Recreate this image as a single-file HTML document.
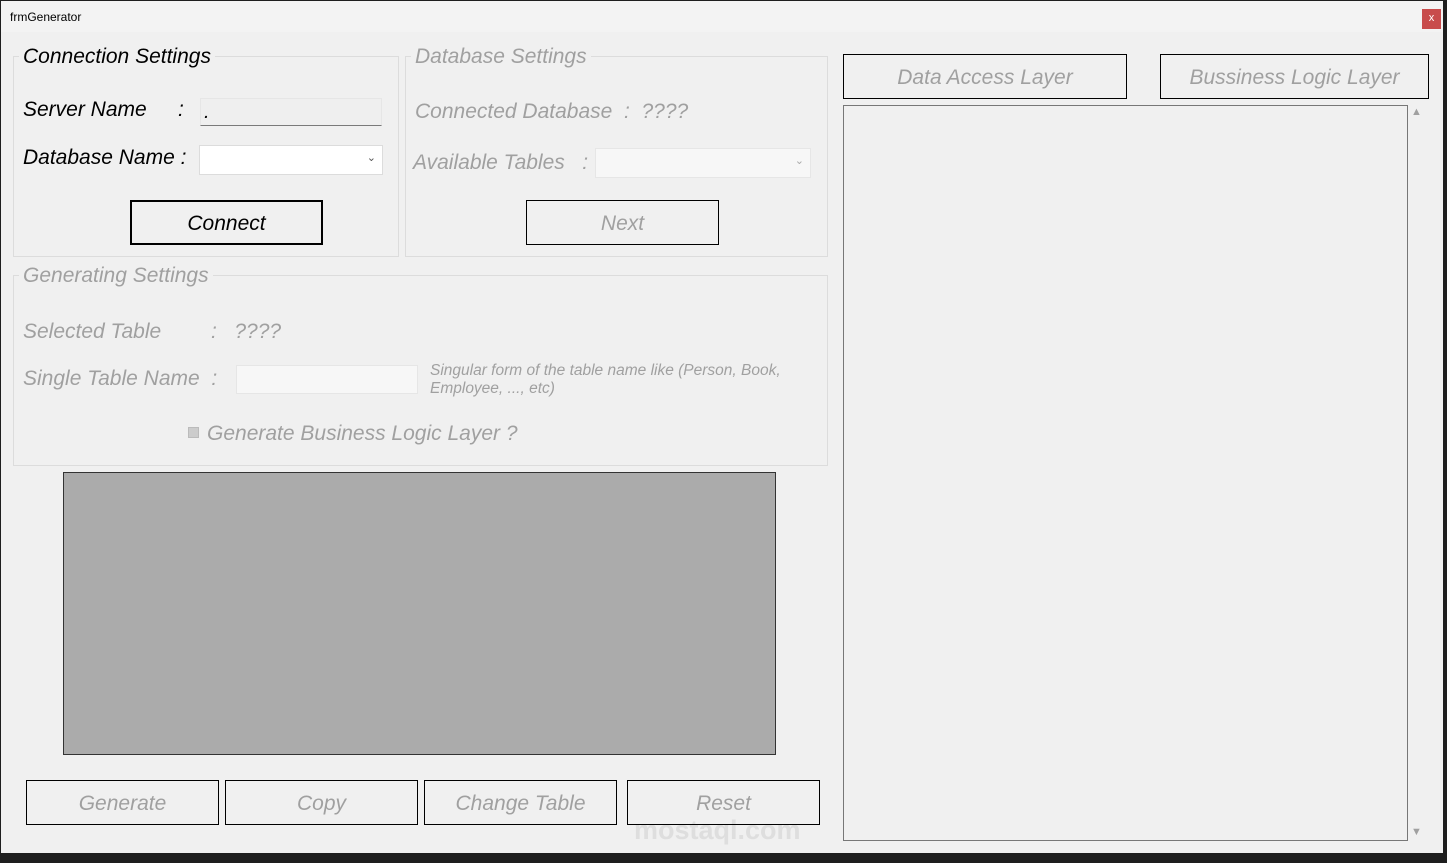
<!DOCTYPE html>
<html><head><meta charset="utf-8"><style>
body{margin:0;width:1447px;height:863px;background:#1e1e1e;position:relative;overflow:hidden;font-family:"Liberation Sans",sans-serif;font-style:italic}
.win{position:absolute;left:1px;top:1px;width:1442px;height:852px;background:#f0f0f0}
.title{position:absolute;left:0;top:0;width:1442px;height:31px;background:#f3f3f3}
.title span{position:absolute;left:9px;top:9px;font-size:12px;font-style:normal;color:#000}
.x{position:absolute;left:1421px;top:8px;width:19px;height:20px;background:#c84c4c;color:#fff;font-size:11px;font-style:normal;text-align:center;line-height:19px}
.a{position:absolute;white-space:nowrap}
.g{position:absolute;border:1px solid #dcdcdc}
.lg{position:absolute;background:#f0f0f0;padding:0 4px;font-size:21px;white-space:nowrap}
.t{font-size:21px}
.dis{color:#a0a0a0}
.btn{position:absolute;border:1px solid #000;box-sizing:border-box;text-align:center;font-size:21px;color:#a0a0a0}
</style></head><body>
<div class="win">
<div class="title"><span>frmGenerator</span><div class="x">x</div></div>
</div>
<div class="g" style="left:13px;top:56px;width:384px;height:199px"></div>
<div class="lg" style="left:19px;top:45px;color:#000">Connection Settings</div>
<div class="a t" style="left:23px;top:98px">Server Name</div>
<div class="a t" style="left:178px;top:98px">:</div>
<div style="position:absolute;left:200px;top:98px;width:182px;height:28px;background:#efefef;border:1px solid #e6e6e6;border-bottom:1px solid #7a7a7a;box-sizing:border-box"><span class="a" style="left:3px;top:2px;font-size:20px">.</span></div>
<div class="a t" style="left:23px;top:146px">Database Name :</div>
<div style="position:absolute;left:199px;top:145px;width:184px;height:30px;background:#fff;border:1px solid #dcdcdc;box-sizing:border-box"><span class="a" style="right:6px;top:5px;font-size:11px;color:#555;font-style:normal">&#8964;</span></div>
<div class="btn" style="left:130px;top:200px;width:193px;height:45px;border-width:2px;color:#000;line-height:43px">Connect</div>
<div class="g" style="left:405px;top:56px;width:421px;height:199px"></div>
<div class="lg dis" style="left:411px;top:45px">Database Settings</div>
<div class="a t dis" style="left:415px;top:100px">Connected Database &nbsp;: &nbsp;????</div>
<div class="a t dis" style="left:413px;top:151px">Available Tables &nbsp;&nbsp;:</div>
<div style="position:absolute;left:595px;top:148px;width:216px;height:30px;background:#f7f7f7;border:1px solid #e6e6e6;box-sizing:border-box"><span class="a" style="right:6px;top:5px;font-size:11px;color:#aaa;font-style:normal">&#8964;</span></div>
<div class="btn" style="left:526px;top:200px;width:193px;height:45px;line-height:45px">Next</div>
<div class="g" style="left:13px;top:275px;width:813px;height:189px"></div>
<div class="lg dis" style="left:19px;top:264px">Generating Settings</div>
<div class="a t dis" style="left:23px;top:320px">Selected Table</div>
<div class="a t dis" style="left:211px;top:320px">: &nbsp;&nbsp;????</div>
<div class="a t dis" style="left:23px;top:367px">Single Table Name &nbsp;:</div>
<div style="position:absolute;left:236px;top:365px;width:182px;height:29px;background:#f7f7f7;border:1px solid #e6e6e6;box-sizing:border-box"></div>
<div class="a dis" style="left:430px;top:362px;font-size:15.5px;line-height:18px">Singular form of the table name like (Person, Book,<br>Employee, ..., etc)</div>
<div style="position:absolute;left:188px;top:427px;width:11px;height:11px;background:#ccc;border:1px solid #bbb;box-sizing:border-box"></div>
<div class="a t dis" style="left:207px;top:422px">Generate Business Logic Layer ?</div>
<div style="position:absolute;left:63px;top:472px;width:713px;height:283px;background:#ababab;border:1px solid #333;box-sizing:border-box"></div>
<div class="a" style="left:634px;top:815px;font-size:27px;font-style:normal;font-weight:bold;color:#dedede">mostaql.com</div>
<div class="btn" style="left:26px;top:780px;width:193px;height:45px;line-height:45px">Generate</div>
<div class="btn" style="left:225px;top:780px;width:193px;height:45px;line-height:45px">Copy</div>
<div class="btn" style="left:424px;top:780px;width:193px;height:45px;line-height:45px">Change Table</div>
<div class="btn" style="left:627px;top:780px;width:193px;height:45px;line-height:45px">Reset</div>
<div class="btn" style="left:843px;top:54px;width:284px;height:45px;line-height:45px">Data Access Layer</div>
<div class="btn" style="left:1160px;top:54px;width:269px;height:45px;line-height:45px">Bussiness Logic Layer</div>
<div style="position:absolute;left:843px;top:105px;width:565px;height:736px;border:1px solid #777;box-sizing:border-box"></div>
<div class="a" style="left:1411px;top:106px;font-size:11px;color:#a0a0a0;font-style:normal">&#9650;</div>
<div class="a" style="left:1411px;top:826px;font-size:11px;color:#a0a0a0;font-style:normal">&#9660;</div>
</body></html>
